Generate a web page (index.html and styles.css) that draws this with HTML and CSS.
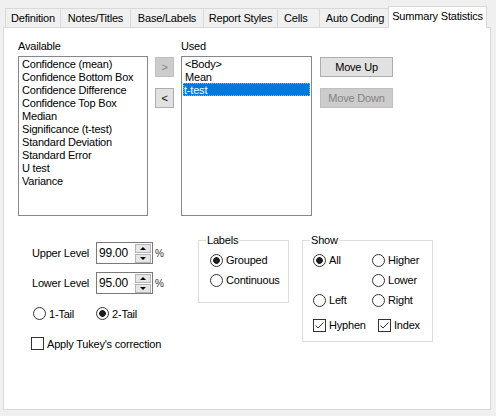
FILE: index.html
```html
<!DOCTYPE html>
<html>
<head>
<meta charset="utf-8">
<link rel="stylesheet" href="styles.css">
</head>
<body>
<div class="tabbar">
  <div class="tab t-def">Definition</div>
  <div class="tab t-notes">Notes/Titles</div>
  <div class="tab t-base">Base/Labels</div>
  <div class="tab t-report">Report Styles</div>
  <div class="tab t-cells">Cells</div>
  <div class="tab t-auto">Auto Coding</div>
  <div class="tab active">Summary Statistics</div>
</div>
<div class="panel">
  <div class="top">
    <div class="col avail">
      <div class="cap">Available</div>
      <div class="list">
        <div class="item">Confidence (mean)</div>
        <div class="item">Confidence Bottom Box</div>
        <div class="item">Confidence Difference</div>
        <div class="item">Confidence Top Box</div>
        <div class="item">Median</div>
        <div class="item">Significance (t-test)</div>
        <div class="item">Standard Deviation</div>
        <div class="item">Standard Error</div>
        <div class="item">U test</div>
        <div class="item">Variance</div>
      </div>
    </div>
    <div class="arrows">
      <button class="btn small dis">&gt;</button>
      <button class="btn small">&lt;</button>
    </div>
    <div class="col used">
      <div class="cap">Used</div>
      <div class="list">
        <div class="item">&lt;Body&gt;</div>
        <div class="item">Mean</div>
        <div class="item sel">t-test</div>
      </div>
    </div>
    <div class="moves">
      <button class="btn wide">Move Up</button>
      <button class="btn wide dis">Move Down</button>
    </div>
  </div>
  <div class="bottom">
    <div class="left">
      <div class="spinrow">
        <span class="lbl">Upper Level</span>
        <div class="spin">
          <span class="val">99.00</span>
          <div class="sbtns"><span class="sb"><i class="up"></i></span><span class="sb"><i class="down"></i></span></div>
        </div>
        <span class="pct">%</span>
      </div>
      <div class="spinrow second">
        <span class="lbl">Lower Level</span>
        <div class="spin">
          <span class="val">95.00</span>
          <div class="sbtns"><span class="sb"><i class="up"></i></span><span class="sb"><i class="down"></i></span></div>
        </div>
        <span class="pct">%</span>
      </div>
      <div class="tailrow">
        <span class="opt tail1"><span class="radio"></span>1-Tail</span>
        <span class="opt"><span class="radio on"></span>2-Tail</span>
      </div>
      <div class="tukey">
        <span class="opt"><span class="check"></span>Apply Tukey's correction</span>
      </div>
    </div>
    <fieldset class="group labels">
      <legend>Labels</legend>
      <div class="inner">
        <div class="row"><span class="opt"><span class="radio on"></span>Grouped</span></div>
        <div class="row"><span class="opt"><span class="radio"></span>Continuous</span></div>
      </div>
    </fieldset>
    <fieldset class="group show">
      <legend>Show</legend>
      <div class="inner">
        <div class="grid">
          <span class="opt"><span class="radio on"></span>All</span>
          <span class="opt"><span class="radio"></span>Higher</span>
          <span></span>
          <span class="opt"><span class="radio"></span>Lower</span>
          <span class="opt"><span class="radio"></span>Left</span>
          <span class="opt"><span class="radio"></span>Right</span>
        </div>
        <div class="checks">
          <span class="opt hyphen"><span class="check"><svg width="11" height="11" viewBox="0 0 11 11"><polyline points="1.5,5.5 4,8 9.5,2.5" fill="none" stroke="#333" stroke-width="1"/></svg></span>Hyphen</span>
          <span class="opt"><span class="check"><svg width="11" height="11" viewBox="0 0 11 11"><polyline points="1.5,5.5 4,8 9.5,2.5" fill="none" stroke="#333" stroke-width="1"/></svg></span>Index</span>
        </div>
      </div>
    </fieldset>
  </div>
</div>
</body>
</html>
```
FILE: styles.css
```css
html, body {
  margin: 0;
  padding: 0;
}
body {
  background: #f0f0f0;
  font: 11px "Liberation Sans", Arial, sans-serif;
  letter-spacing: -0.2px;
  color: #000;
  width: 496px;
  height: 416px;
  overflow: hidden;
}

.tabbar {
  display: flex;
  align-items: flex-end;
  height: 27px;
  padding-left: 5px;
  box-sizing: border-box;
}
.tab {
  height: 19px;
  box-sizing: border-box;
  border: 1px solid #d9d9d9;
  border-bottom: 0;
  margin-right: -1px;
  line-height: 18px;
  text-align: center;
  background: #f0f0f0;
  white-space: nowrap;
  flex: none;
}
.t-def { width: 56px; }
.t-notes { width: 71px; }
.t-base { width: 74px; }
.t-report { width: 75px; }
.t-cells { width: 43px; text-align: left; padding-left: 6px; }
.t-auto { width: 72px; }
.tab.active {
  position: relative;
  z-index: 2;
  height: 22px;
  width: 99px;
  margin-left: -2px;
  margin-bottom: -1px;
  background: #fff;
  line-height: 18px;
}

.panel {
  margin-left: 3px;
  width: 488px;
  height: 383px;
  box-sizing: border-box;
  border: 1px solid #d9d9d9;
  background: #fff;
  padding: 12px 0 0 14px;
}

.top {
  display: flex;
  align-items: flex-start;
}
.cap {
  height: 13px;
  line-height: 13px;
  margin-bottom: 3px;
}
.avail { width: 130px; }
.used { width: 131px; margin-left: 7px; }
.list {
  height: 160px;
  box-sizing: border-box;
  border: 1px solid #828790;
  background: #fff;
}
.item {
  height: 13px;
  line-height: 15px;
  padding-left: 3px;
  white-space: nowrap;
}
.item.sel {
  margin: 0 1px;
  padding-left: 0;
  box-sizing: border-box;
  background: #0078d7;
  color: #fff;
  border: 1px dotted #f09a3a;
  line-height: 13px;
}

.arrows, .moves {
  display: flex;
  flex-direction: column;
  gap: 11px;
  padding-top: 17px;
}
.arrows { margin-left: 7px; width: 19px; }
.moves { margin-left: 8px; width: 73px; }

.btn {
  box-sizing: border-box;
  border: 1px solid #adadad;
  background: #e1e1e1;
  font: inherit;
  letter-spacing: inherit;
  color: #000;
  padding: 0;
  margin: 0;
  height: 20px;
  line-height: 18px;
  text-align: center;
}
.btn.small { width: 19px; }
.btn.wide { width: 73px; }
.btn.dis {
  background: #cccccc;
  border-color: #bfbfbf;
  color: #838383;
}

.bottom {
  display: flex;
  align-items: flex-start;
  margin-top: 17px;
}
.left {
  margin-left: 14px;
  width: 166px;
  padding-top: 9px;
}
.spinrow {
  display: flex;
  align-items: center;
  height: 22px;
  margin-bottom: 8px;
}
.spinrow.second { margin-bottom: 13px; }
.lbl { width: 64px; }
.spin {
  width: 57px;
  height: 22px;
  box-sizing: border-box;
  border: 1px solid #7a7a7a;
  display: flex;
  align-items: center;
}
.val {
  padding-left: 2px;
  font-size: 12px;
}
.sbtns {
  margin-left: auto;
  margin-right: 1px;
  display: flex;
  flex-direction: column;
  gap: 1px;
}
.sb {
  width: 16px;
  height: 9px;
  box-sizing: border-box;
  border: 1px solid #b4b4b4;
  background: #e6e6e6;
  display: flex;
  align-items: center;
  justify-content: center;
}
.sb i {
  width: 0;
  height: 0;
  border-left: 3px solid transparent;
  border-right: 3px solid transparent;
}
.sb i.up { border-bottom: 3px solid #000; }
.sb i.down { border-top: 3px solid #000; }
.pct {
  margin-left: 2px;
  font-size: 10px;
  color: #333;
}

.opt {
  display: inline-flex;
  align-items: center;
  gap: 3px;
  white-space: nowrap;
}
.radio {
  width: 13px;
  height: 13px;
  box-sizing: border-box;
  border: 1px solid #333;
  border-radius: 50%;
  background: #fff;
  flex: none;
}
.radio.on {
  background: radial-gradient(circle, #1e1e1e 3px, #fff 3.7px);
}
.check {
  width: 13px;
  height: 13px;
  box-sizing: border-box;
  border: 1px solid #333;
  background: #fff;
  flex: none;
  display: flex;
}
.check svg { display: block; }

.tailrow {
  display: flex;
  height: 13px;
  align-items: center;
}
.tail1 { margin-left: 1px; width: 63px; }
.tukey {
  margin-top: 17px;
  margin-left: -1px;
  display: flex;
  height: 13px;
  align-items: center;
}

.group {
  margin: 0;
  padding: 0;
  border: 1px solid #dcdcdc;
  box-sizing: border-box;
  min-width: 0;
}
.group legend {
  margin-left: 7px;
  padding: 0 1px;
  line-height: 14px;
  height: 14px;
}
.labels {
  width: 91px;
  height: 70px;
}
.labels .inner {
  padding: 3px 0 0 11px;
}
.labels .row {
  height: 20px;
  display: flex;
  align-items: center;
}
.show {
  margin-left: 13px;
  width: 131px;
  height: 109px;
}
.show .inner {
  padding: 3px 0 0 10px;
}
.show .grid {
  display: grid;
  grid-template-columns: 59px auto;
  grid-auto-rows: 20px;
  align-items: center;
}
.checks {
  display: flex;
  align-items: center;
  height: 20px;
  margin-top: 5px;
}
.hyphen { width: 65px; }
```
